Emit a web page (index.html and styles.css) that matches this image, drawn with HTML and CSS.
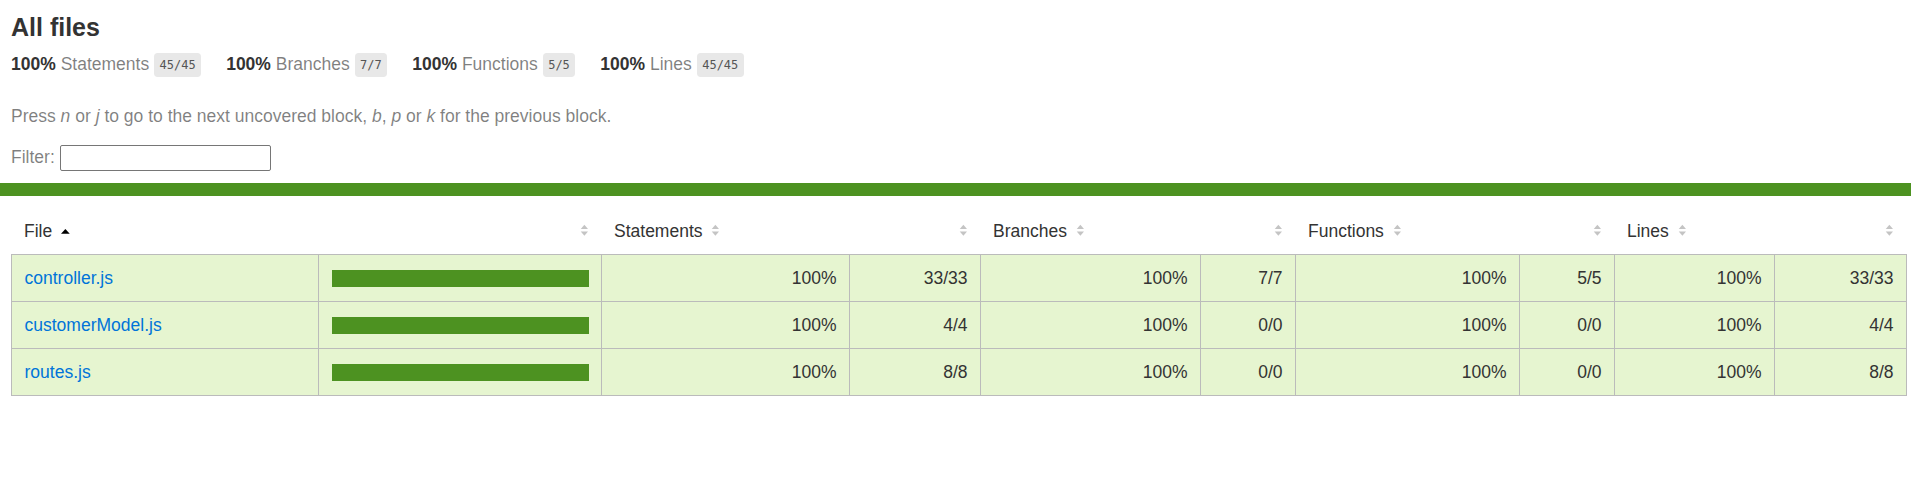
FILE: index.html
```html
<!DOCTYPE html>
<html lang="en">
<head>
<meta charset="utf-8">
<title>Code coverage report for All files</title>
<link rel="stylesheet" href="styles.css">
</head>
<body>
<div class="wrapper">
  <div class="pad1">
    <h1>All files</h1>
    <div class="summary">
      <div class="summary-item">
        <span class="strong">100% </span>
        <span class="quiet">Statements</span>
        <span class="fraction">45/45</span>
      </div>
      <div class="summary-item">
        <span class="strong">100% </span>
        <span class="quiet">Branches</span>
        <span class="fraction">7/7</span>
      </div>
      <div class="summary-item">
        <span class="strong">100% </span>
        <span class="quiet">Functions</span>
        <span class="fraction">5/5</span>
      </div>
      <div class="summary-item">
        <span class="strong">100% </span>
        <span class="quiet">Lines</span>
        <span class="fraction">45/45</span>
      </div>
    </div>
    <p class="quiet">Press <em>n</em> or <em>j</em> to go to the next uncovered block, <em>b</em>, <em>p</em> or <em>k</em> for the previous block.</p>
    <div class="quiet filter">Filter: <input type="search" class="file-search"></div>
  </div>
  <div class="status-line high"></div>
  <div class="pad1">
    <table class="coverage-summary">
      <colgroup>
        <col class="w-file"><col class="w-pic"><col class="w-spct"><col class="w-sabs"><col class="w-bpct"><col class="w-babs"><col class="w-fpct"><col class="w-fabs"><col class="w-lpct"><col class="w-labs">
      </colgroup>
      <thead>
        <tr>
          <th class="file">File<svg class="sorter" viewBox="0 0 7 10"><polygon class="asc" points="0,7.8 3.5,3.9 7,7.8"/></svg></th>
          <th class="pic"><svg class="sorter" viewBox="0 0 7 10"><polygon class="up" points="0.6,4 3.5,0.6 6.4,4"/><polygon class="down" points="0.6,6 3.5,9.4 6.4,6"/></svg></th>
          <th class="pct">Statements<svg class="sorter" viewBox="0 0 7 10"><polygon class="up" points="0.6,4 3.5,0.6 6.4,4"/><polygon class="down" points="0.6,6 3.5,9.4 6.4,6"/></svg></th>
          <th class="abs"><svg class="sorter" viewBox="0 0 7 10"><polygon class="up" points="0.6,4 3.5,0.6 6.4,4"/><polygon class="down" points="0.6,6 3.5,9.4 6.4,6"/></svg></th>
          <th class="pct">Branches<svg class="sorter" viewBox="0 0 7 10"><polygon class="up" points="0.6,4 3.5,0.6 6.4,4"/><polygon class="down" points="0.6,6 3.5,9.4 6.4,6"/></svg></th>
          <th class="abs"><svg class="sorter" viewBox="0 0 7 10"><polygon class="up" points="0.6,4 3.5,0.6 6.4,4"/><polygon class="down" points="0.6,6 3.5,9.4 6.4,6"/></svg></th>
          <th class="pct">Functions<svg class="sorter" viewBox="0 0 7 10"><polygon class="up" points="0.6,4 3.5,0.6 6.4,4"/><polygon class="down" points="0.6,6 3.5,9.4 6.4,6"/></svg></th>
          <th class="abs"><svg class="sorter" viewBox="0 0 7 10"><polygon class="up" points="0.6,4 3.5,0.6 6.4,4"/><polygon class="down" points="0.6,6 3.5,9.4 6.4,6"/></svg></th>
          <th class="pct">Lines<svg class="sorter" viewBox="0 0 7 10"><polygon class="up" points="0.6,4 3.5,0.6 6.4,4"/><polygon class="down" points="0.6,6 3.5,9.4 6.4,6"/></svg></th>
          <th class="abs"><svg class="sorter" viewBox="0 0 7 10"><polygon class="up" points="0.6,4 3.5,0.6 6.4,4"/><polygon class="down" points="0.6,6 3.5,9.4 6.4,6"/></svg></th>
        </tr>
      </thead>
      <tbody>
        <tr>
          <td class="file high"><a href="#">controller.js</a></td>
          <td class="pic high"><div class="chart"><div class="cover-fill" style="width: 100%"></div><div class="cover-empty" style="width: 0%"></div></div></td>
          <td class="pct high">100%</td>
          <td class="abs high">33/33</td>
          <td class="pct high">100%</td>
          <td class="abs high">7/7</td>
          <td class="pct high">100%</td>
          <td class="abs high">5/5</td>
          <td class="pct high">100%</td>
          <td class="abs high">33/33</td>
        </tr>
        <tr>
          <td class="file high"><a href="#">customerModel.js</a></td>
          <td class="pic high"><div class="chart"><div class="cover-fill" style="width: 100%"></div><div class="cover-empty" style="width: 0%"></div></div></td>
          <td class="pct high">100%</td>
          <td class="abs high">4/4</td>
          <td class="pct high">100%</td>
          <td class="abs high">0/0</td>
          <td class="pct high">100%</td>
          <td class="abs high">0/0</td>
          <td class="pct high">100%</td>
          <td class="abs high">4/4</td>
        </tr>
        <tr>
          <td class="file high"><a href="#">routes.js</a></td>
          <td class="pic high"><div class="chart"><div class="cover-fill" style="width: 100%"></div><div class="cover-empty" style="width: 0%"></div></div></td>
          <td class="pct high">100%</td>
          <td class="abs high">8/8</td>
          <td class="pct high">100%</td>
          <td class="abs high">0/0</td>
          <td class="pct high">100%</td>
          <td class="abs high">0/0</td>
          <td class="pct high">100%</td>
          <td class="abs high">8/8</td>
        </tr>
      </tbody>
    </table>
  </div>
</div>
</body>
</html>
```

FILE: styles.css
```css
*, *::before, *::after {
  box-sizing: border-box;
}
html, body {
  margin: 0;
  padding: 0;
  height: 100%;
}
body {
  font-family: "Liberation Sans", Arial, Helvetica, sans-serif;
  font-size: 17.5px;
  color: #333;
  background: #fff;
}
h1 {
  font-size: 25px;
  margin: 0;
}
a {
  color: #0074D9;
  text-decoration: none;
}
.strong {
  font-weight: bold;
}
.quiet {
  color: rgba(0, 0, 0, 0.5);
}
.pad1 {
  padding: 12.5px 5px 12.5px 11px;
}
.summary {
  display: flex;
}
.summary-item {
  padding: 12.5px 25px 12.5px 0;
}
.fraction {
  font-family: "DejaVu Sans Mono", "Liberation Mono", monospace;
  font-size: 12px;
  color: #555;
  background: #e8e8e8;
  padding: 5px 5.5px;
  border-radius: 3.75px;
  vertical-align: middle;
}
p {
  margin: 18.5px 0 17.5px;
}
.file-search {
  width: 211px;
  height: 26px;
  margin: 0;
  padding: 1px 2px;
  border: 1px solid #767676;
  border-radius: 2px;
  font-size: 16px;
  vertical-align: middle;
  background: #fff;
}
.status-line {
  height: 12.5px;
}
.status-line.high {
  background: rgb(77, 146, 33);
}
.coverage-summary {
  border-collapse: collapse;
  width: 100%;
  table-layout: fixed;
}
.w-file { width: 307px; }
.w-pic { width: 283px; }
.w-spct { width: 248px; }
.w-sabs { width: 131px; }
.w-bpct { width: 220px; }
.w-babs { width: 95px; }
.w-fpct { width: 224px; }
.w-fabs { width: 95px; }
.w-lpct { width: 160px; }
.w-labs { width: 132px; }
.coverage-summary tr {
  border-bottom: 1px solid #bbb;
}
.coverage-summary tbody {
  border: 1px solid #bbb;
}
.coverage-summary td,
.coverage-summary th {
  padding: 12.5px;
}
.coverage-summary td {
  border-right: 1px solid #bbb;
}
.coverage-summary td:last-child {
  border-right: none;
}
.coverage-summary th {
  text-align: left;
  font-weight: normal;
  white-space: nowrap;
}
.coverage-summary th.pic,
.coverage-summary th.abs,
.coverage-summary td.pct,
.coverage-summary td.abs {
  text-align: right;
}
.coverage-summary td.file {
  white-space: nowrap;
}
.sorter {
  width: 8.75px;
  height: 12.5px;
  margin-left: 8.75px;
  display: inline-block;
}
.sorter .up {
  fill: #c4c4c4;
}
.sorter .down {
  fill: #c4c4c4;
}
.sorter .asc {
  fill: #000;
}
.high {
  background: rgb(230, 245, 208);
}
.chart {
  line-height: 0;
}
.high .chart {
  border: 1px solid rgb(77, 146, 33);
}
.cover-fill,
.cover-empty {
  display: inline-block;
  height: 15px;
}
.high .cover-fill {
  background: rgb(77, 146, 33);
}
.cover-empty {
  background: #fff;
}
```
